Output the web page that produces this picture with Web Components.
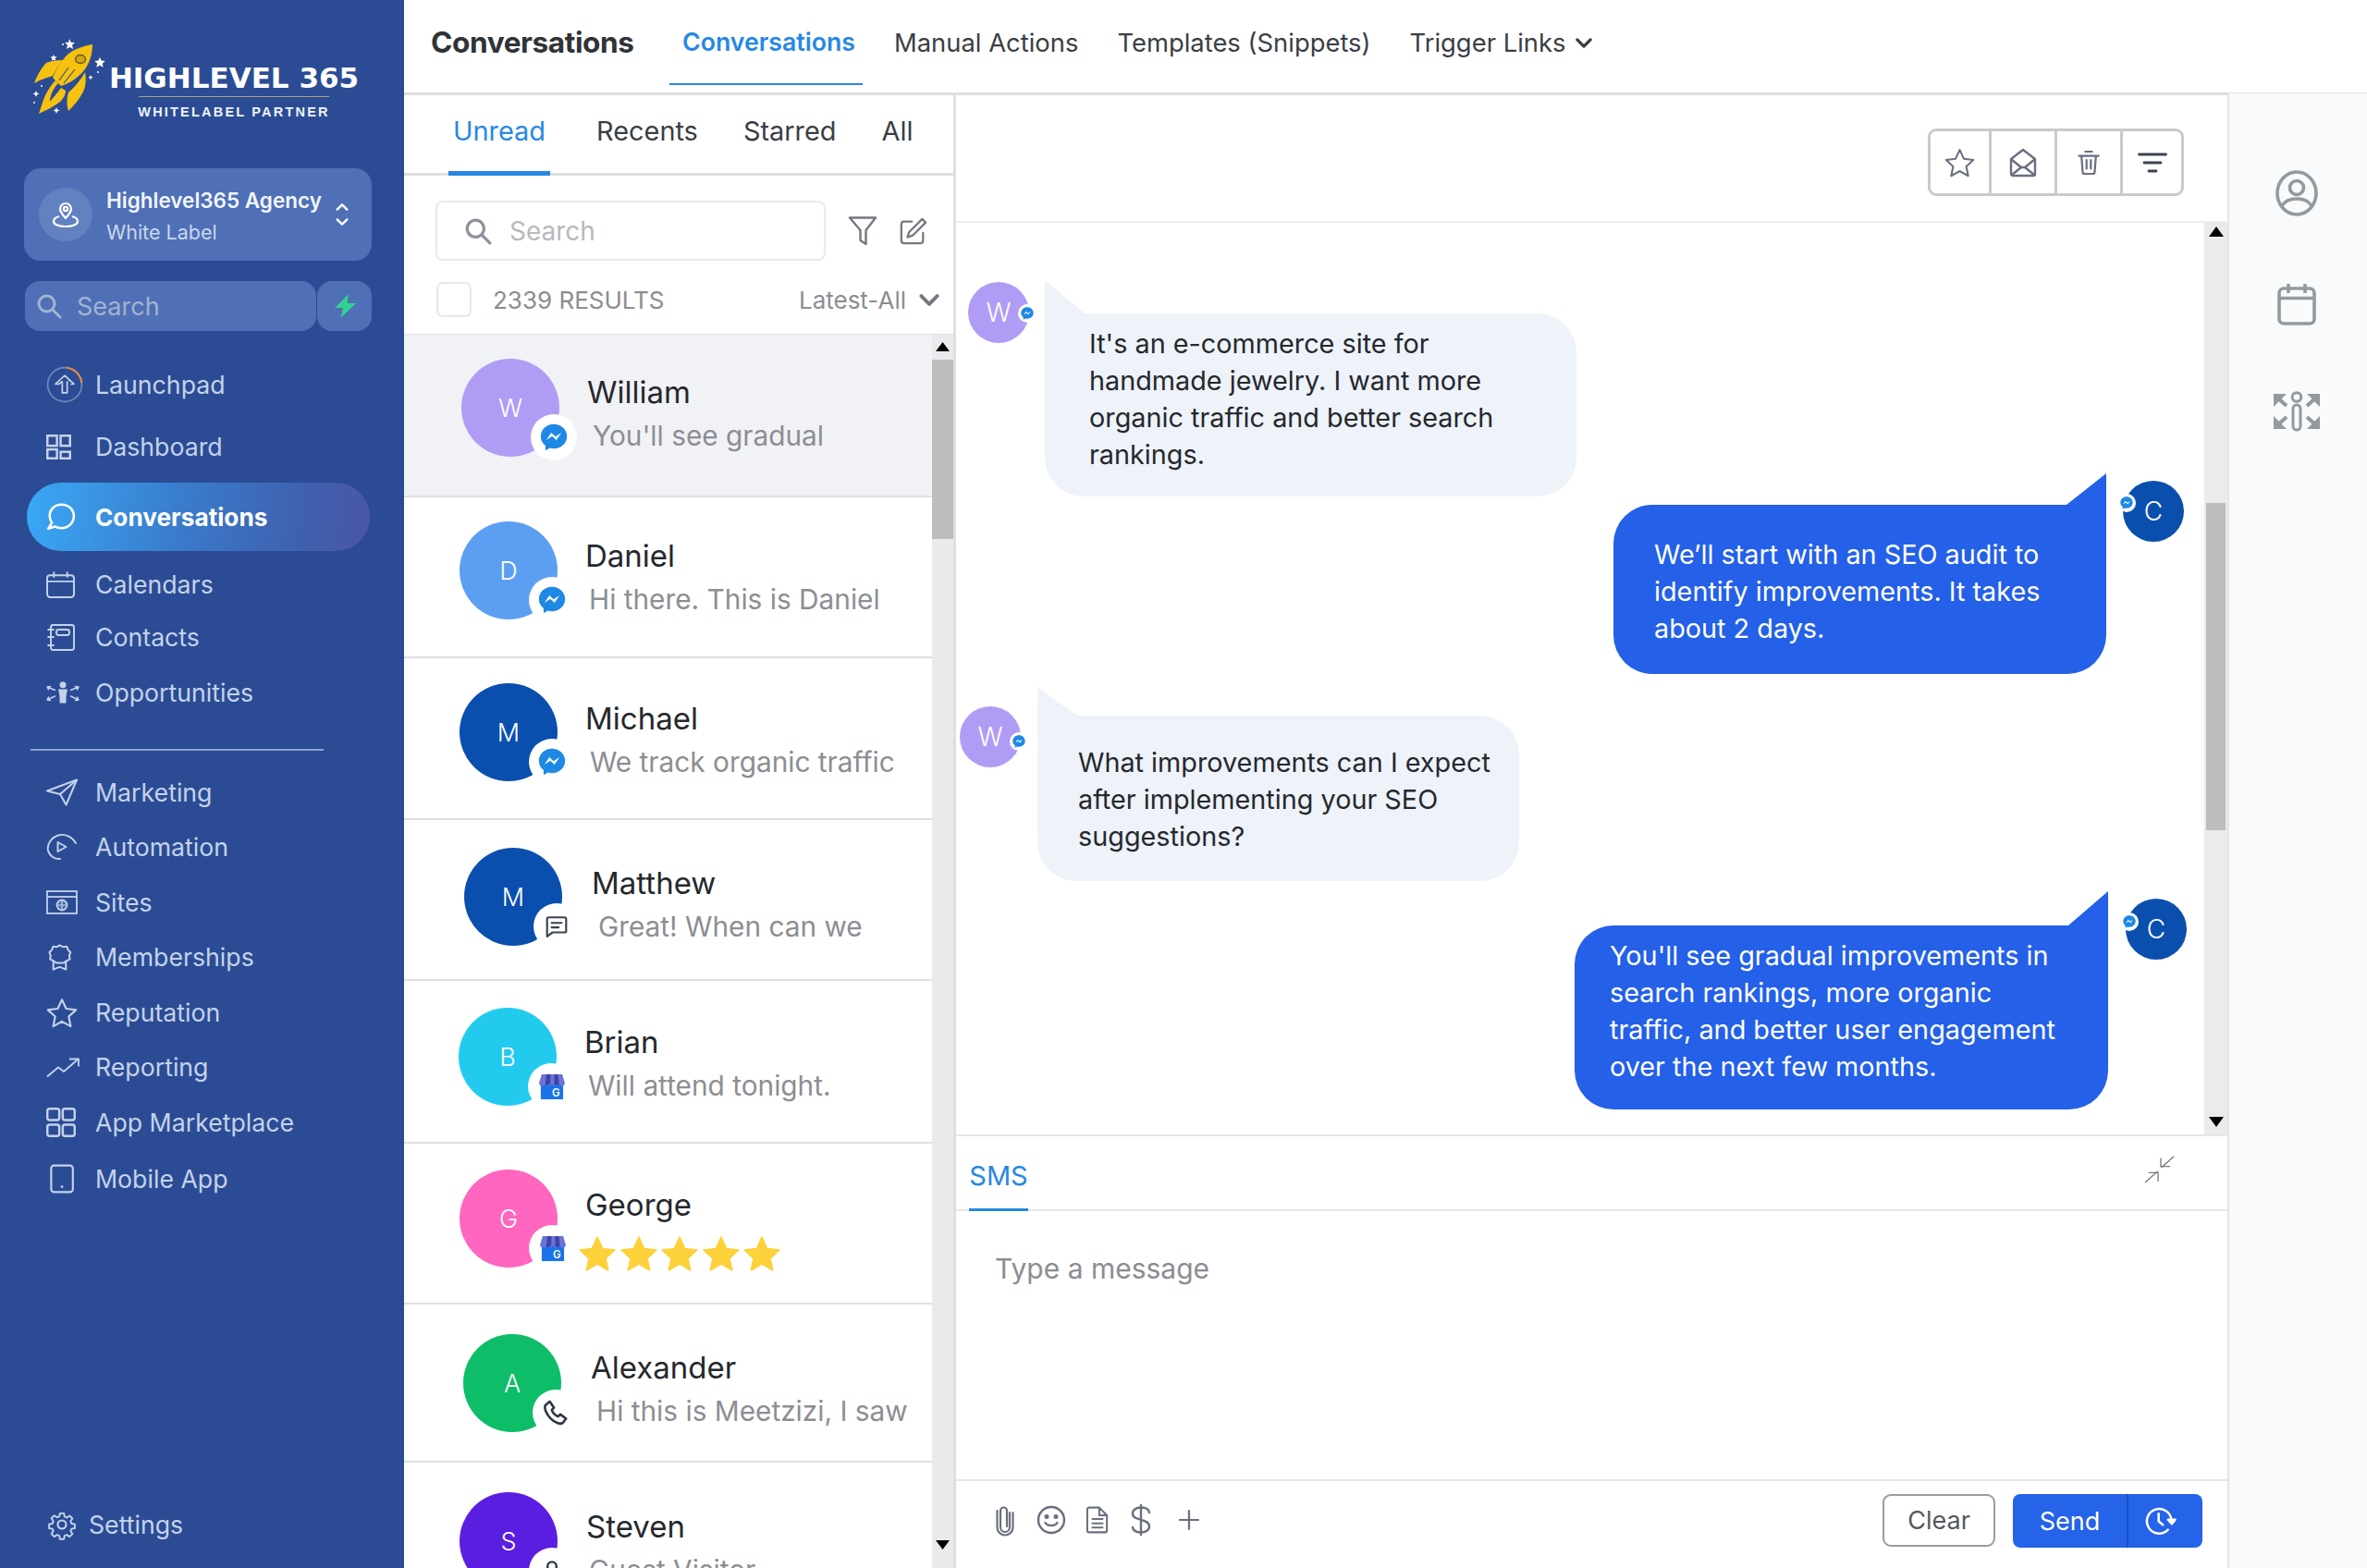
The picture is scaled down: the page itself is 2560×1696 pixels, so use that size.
<!DOCTYPE html>
<html>
<head>
<meta charset="utf-8">
<title>Conversations</title>
<style>
  html, body { margin: 0; padding: 0; height: 1696px; overflow: hidden; background: #fff; font-family: Inter, "Noto Sans", sans-serif; }
</style>
</head>
<body>
<hl-app>
  <hl-sidebar slot="side">
    <hl-logo></hl-logo>
    <hl-agency title-text="Highlevel365 Agency" sub-text="White Label"></hl-agency>
    <hl-side-search></hl-side-search>
    <hl-nav-item icon="launch" size="40" h="60" style="margin-top:28px">Launchpad</hl-nav-item>
    <hl-nav-item icon="dash" size="27" h="60" style="margin-top:7px">Dashboard</hl-nav-item>
    <hl-nav-item icon="chat" size="32" h="74" active style="margin-top:9px">Conversations</hl-nav-item>
    <hl-nav-item icon="calendar" size="31" h="54" style="margin-top:9px">Calendars</hl-nav-item>
    <hl-nav-item icon="contacts" size="32" h="54" style="margin-top:3px">Contacts</hl-nav-item>
    <hl-nav-item icon="opps" size="36" h="54" style="margin-top:6px">Opportunities</hl-nav-item>
    <hl-nav-divider></hl-nav-divider>
    <hl-nav-item icon="send" size="34" h="59.5">Marketing</hl-nav-item>
    <hl-nav-item icon="auto" size="34" h="59.5">Automation</hl-nav-item>
    <hl-nav-item icon="sites" size="34" h="59.5">Sites</hl-nav-item>
    <hl-nav-item icon="badge" size="29" h="59.5">Memberships</hl-nav-item>
    <hl-nav-item icon="star" size="34" h="59.5">Reputation</hl-nav-item>
    <hl-nav-item icon="trend" size="36" h="59.5">Reporting</hl-nav-item>
    <hl-nav-item icon="grid" size="32" h="59.5">App Marketplace</hl-nav-item>
    <hl-nav-item icon="mobile" size="32" h="60" style="margin-top:1px">Mobile App</hl-nav-item>
    <hl-nav-item icon="gear" size="34" h="60" cell="46" style="margin-top:auto;margin-bottom:17px">Settings</hl-nav-item>
  </hl-sidebar>

  <hl-topbar slot="top"></hl-topbar>

  <hl-conv-list slot="list">
    <hl-conv-row name="William" initial="W" color="#b19cf5" badge="messenger" selected h="176" ax="62" ay="26" tx="198" ty="42" sx="6">You'll see gradual</hl-conv-row>
    <hl-conv-row name="Daniel" initial="D" color="#5c9ff2" badge="messenger" h="174" ax="60" ay="26" tx="196" ty="43" sx="4">Hi there. This is Daniel</hl-conv-row>
    <hl-conv-row name="Michael" initial="M" color="#0b4fae" badge="messenger" h="175" ax="60" ay="27" tx="196" ty="45" sx="5">We track organic traffic</hl-conv-row>
    <hl-conv-row name="Matthew" initial="M" color="#0b4fae" badge="sms" h="174" ax="65" ay="30" tx="203" ty="48" sx="7">Great! When can we</hl-conv-row>
    <hl-conv-row name="Brian" initial="B" color="#22cbee" badge="gmb" h="176" ax="59" ay="29" tx="195" ty="46" sx="4">Will attend tonight.</hl-conv-row>
    <hl-conv-row name="George" initial="G" color="#ff66bf" badge="gmb" h="174" ax="60" ay="28" tx="196" ty="46" stars></hl-conv-row>
    <hl-conv-row name="Alexander" initial="A" color="#0dbd68" badge="phone" h="171" ax="64" ay="32" tx="202" ty="48" sx="6">Hi this is Meetzizi, I saw</hl-conv-row>
    <hl-conv-row name="Steven" initial="S" color="#5b1ee0" badge="guest" h="200" ax="60" ay="32" tx="197" ty="49" sx="3">Guest Visitor</hl-conv-row>
  </hl-conv-list>

  <hl-chat slot="chat">
    <hl-msg from="W" color="#b19cf5" w="575" tail="36" pt="13" pb="25" px="48" inset="13" gap="17" ay="2" dot="24" style="margin-top:62px">It's an e-commerce site for<br>handmade jewelry. I want more<br>organic traffic and better search<br>rankings.</hl-msg>
    <hl-msg sent from="C" color="#0b4fae" w="533" tail="34" pt="34" pb="29" px="44" inset="22" gap="18" ay="8" dot="14" style="margin-top:-25px">We’ll start with an SEO audit to<br>identify improvements. It takes<br>about 2 days.</hl-msg>
    <hl-msg from="W" color="#b19cf5" w="521" tail="31" pt="31" pb="28" px="44" inset="4" gap="18" ay="21" dot="28" style="margin-top:14px">What improvements can I expect<br>after implementing your SEO<br>suggestions?</hl-msg>
    <hl-msg sent from="C" color="#0b4fae" w="577" tail="37" pt="13" pb="26" px="38" inset="19" gap="19" ay="8" dot="15" style="margin-top:11px">You'll see gradual improvements in<br>search rankings, more organic<br>traffic, and better user engagement<br>over the next few months.</hl-msg>
  </hl-chat>

  <hl-rail slot="rail"></hl-rail>
</hl-app>

<script>
// every icon lives here, drawn on its own viewBox
const ICONS = {
  launch: `<svg viewBox="0 0 38 38" fill="none" stroke="currentColor" stroke-width="1.6" stroke-linejoin="round"><circle cx="19" cy="19" r="17.5" stroke="#7189bd"/><path d="M21 1.7A17.5 17.5 0 0 1 36.4 17" stroke="#e88b3f" stroke-width="2"/><path d="M19 9.5 28.5 18.5h-3.5M19 9.5 9.5 18.5H13l3.5-3M21.5 15.5v12h-5v-12M19 9.5l6 6"/></svg>`,
  dash: `<svg viewBox="0 0 26 26" fill="none" stroke="currentColor" stroke-width="2.400"><rect x="1.200" y="1.200" width="10" height="10.500"/><rect x="15" y="1.200" width="9.800" height="10.500"/><rect x="1.200" y="15.500" width="10" height="9.300"/><rect x="15" y="18" width="9.800" height="6.800"/></svg>`,
  grid: `<svg viewBox="0 0 26 26" fill="none" stroke="currentColor" stroke-width="2"><rect x="1" y="1" width="10.500" height="10" rx="2"/><rect x="14.500" y="1" width="10.500" height="10" rx="2"/><rect x="1" y="15" width="10.500" height="10" rx="2"/><rect x="14.500" y="15" width="10.500" height="10" rx="2"/></svg>`,
  chat: `<svg viewBox="0 0 30 30" fill="none" stroke="currentColor" stroke-width="2.400" stroke-linejoin="round"><path d="M15.500 2.500C8.600 2.500 3.500 7.600 3.500 14c0 2.600.8 5 2.200 6.900L2 27l6.600-2.200c2 1.100 4.400 1.700 6.900 1.700 6.900 0 12.500-5.500 12.500-12.200S22.400 2.500 15.500 2.500z"/></svg>`,
  calendar: `<svg viewBox="0 0 30 30" fill="none" stroke="currentColor" stroke-width="1.900" stroke-linejoin="round"><rect x="1" y="5" width="28" height="23" rx="3"/><path d="M1 11.500h28M8 1.500v6M22 1.500v6"/></svg>`,
  contacts: `<svg viewBox="0 0 32 32" fill="none" stroke="currentColor" stroke-width="1.900" stroke-linejoin="round"><rect x="5" y="3" width="25" height="27" rx="2.500"/><rect x="11" y="8" width="14" height="6" rx="2.500"/><path d="M1.500 8h7M1.500 16h7M1.500 25h7"/></svg>`,
  opps: `<svg viewBox="0 0 36 24" fill="currentColor" stroke="currentColor" stroke-width="1.400" stroke-linecap="round"><circle cx="18" cy="3.800" r="3.500" stroke="none"/><path d="M13 8.500h10l-1.500 7.500v7.500h-7V16z" stroke="none"/><path d="M1 6l8.500 3.500M1 20l8.500-4M35 6l-8.500 3.500M35 20l-8.500-4M1 6l3.500-.5M1 6l1.500 3M35 6l-3.500-.5M35 6l-1.500 3M1 20l3.500.5M1 20l1.500-3M35 20l-3.500.5M35 20l-1.500-3" fill="none"/></svg>`,
  send: `<svg viewBox="0 0 34 30" fill="none" stroke="currentColor" stroke-width="2" stroke-linejoin="round"><path d="M1 13.500 33 1.500 21.500 28.500 15 17z"/><path d="M15 17 33 1.500"/></svg>`,
  auto: `<svg viewBox="0 0 34 30" fill="none" stroke="currentColor" stroke-width="1.900" stroke-linecap="round" stroke-linejoin="round"><path d="M32 11C28 4 20 .5 13 2.500 5 5 .5 13 2 19c1.500 6 7.500 9.500 13 9"/><path d="M12.500 10l9 5-9 5z"/></svg>`,
  sites: `<svg viewBox="0 0 34 26" fill="none" stroke="currentColor" stroke-width="1.800"><rect x="1" y="1" width="32" height="24"/><path d="M1 7h32"/><circle cx="17" cy="16" r="5.500" fill="currentColor" fill-opacity=".25"/><path d="M11.500 16h11M17 10.500v11" stroke-width="1.200"/></svg>`,
  badge: `<svg viewBox="0 0 28 32" fill="none" stroke="currentColor" stroke-width="2.200" stroke-linejoin="round"><path d="M14 1.500l4 2 4.500-.5 1.500 4 3 3-1.500 4 .8 4-4 2.300-3.500 2.200H10l-3.500-2.200-4-2.300.8-4-1.500-4 3-3L6.300 3l4.500.5z"/><path d="M6.500 20.500V30.500l7.500-3 7.500 3v-10"/></svg>`,
  star: `<svg viewBox="0 0 32 30" fill="none" stroke="currentColor" stroke-width="2" stroke-linejoin="round"><path d="M16 2l4.300 9.300 10 1.200-7.400 6.800 2 10L16 24.300 7.100 29.300l2-10-7.400-6.800 10-1.200z"/></svg>`,
  trend: `<svg viewBox="0 0 36 24" fill="none" stroke="currentColor" stroke-width="1.800" stroke-linejoin="round"><path d="M1 22.500 13 12.500l6 4.500L34 4"/><path d="M25 3.500h10v8"/></svg>`,
  mobile: `<svg viewBox="0 0 30 30" fill="none" stroke="currentColor" stroke-width="2"><rect x="5" y="1.500" width="22" height="27" rx="3"/><circle cx="16" cy="23" r="1.300" fill="currentColor" stroke="none"/></svg>`,
  gear: `<svg viewBox="0 0 24 24" fill="none" stroke="currentColor" stroke-width="1.500" stroke-linejoin="round"><circle cx="12" cy="12" r="3.200"/><path d="M10.300 2.500h3.400l.5 2.800 1.900.8 2.400-1.600 2.400 2.400-1.600 2.400.8 1.900 2.800.5v3.400l-2.800.5-.8 1.900 1.600 2.400-2.400 2.400-2.400-1.600-1.900.8-.5 2.800h-3.400l-.5-2.800-1.900-.8-2.400 1.600-2.400-2.400 1.600-2.400-.8-1.900-2.800-.5v-3.400l2.800-.5.8-1.900L3.100 6.700l2.400-2.400 2.400 1.600 1.900-.8z" transform="translate(1.200 1.200) scale(.9)"/></svg>`,
  search: `<svg viewBox="0 0 28 28" fill="none" stroke="currentColor" stroke-width="3" stroke-linecap="round"><circle cx="11.500" cy="11.500" r="8.500"/><path d="M18 18l8 8"/></svg>`,
  bolt: `<svg viewBox="0 0 28 28" fill="currentColor"><path d="M18 1 3 16h9L9.500 27 26 11h-9.500z"/></svg>`,
  pin: `<svg viewBox="0 0 30 30" fill="none" stroke="currentColor" stroke-width="2.200" stroke-linejoin="round"><path d="M15 19c-3-3.500-6-6.500-6-10a6 6 0 0 1 12 0c0 3.500-3 6.500-6 10z"/><circle cx="15" cy="9" r="2.200"/><path d="M8 17c-3.500 1-6 3-6 5.500C2 26 8 28 15 28s13-2 13-5.500c0-2.500-2.500-4.500-6-5.500"/></svg>`,
  updown: `<svg viewBox="0 0 18 30" fill="none" stroke="currentColor" stroke-width="2.600" stroke-linecap="round" stroke-linejoin="round"><path d="M3 9l6-6 6 6M3 21l6 6 6-6"/></svg>`,
  chevron: `<svg viewBox="0 0 20 12" fill="none" stroke="currentColor" stroke-width="3.600" stroke-linecap="round" stroke-linejoin="round"><path d="M2 2l8 8 8-8"/></svg>`,
  filter: `<svg viewBox="0 0 32 34" fill="none" stroke="currentColor" stroke-width="2.400" stroke-linejoin="round"><path d="M2 2.500h28L19.500 16v15l-6-4V16z"/></svg>`,
  edit: `<svg viewBox="0 0 32 32" fill="none" stroke="currentColor" stroke-width="2.400" stroke-linejoin="round" stroke-linecap="round"><path d="M27 18v9a3 3 0 0 1-3 3H5a3 3 0 0 1-3-3V8a3 3 0 0 1 3-3h9"/><path d="M26 2l4 4-15 15-6 2 2-6z"/></svg>`,
  envelope: `<svg viewBox="0 0 30 32" fill="none" stroke="currentColor" stroke-width="2.400" stroke-linejoin="round"><path d="M2 12 15 2l13 10v16a2 2 0 0 1-2 2H4a2 2 0 0 1-2-2z"/><path d="M2.500 12.500 13 21h4l10.500-8.500M3 29l10-8M27 29l-10-8"/></svg>`,
  trash: `<svg viewBox="0 0 26 30" fill="none" stroke="currentColor" stroke-width="2.400" stroke-linejoin="round" stroke-linecap="round"><path d="M1.500 7h23M9 2h8M4.500 7l1.500 19a2 2 0 0 0 2 2h10a2 2 0 0 0 2-2l1.500-19M10.500 12v10M15.500 12v10"/></svg>`,
  lines: `<svg viewBox="0 0 32 24" fill="none" stroke="#3d4350" stroke-width="2.800" stroke-linecap="round"><path d="M1.500 3h29M7 12h18M12 21h8"/></svg>`,
  user: `<svg viewBox="0 0 46 50" fill="none" stroke="currentColor" stroke-width="3.600"><ellipse cx="23" cy="25" rx="21" ry="23"/><circle cx="23" cy="19" r="7.500"/><path d="M7 39c3-6 9-8 16-8s13 2 16 8"/></svg>`,
  railcal: `<svg viewBox="0 0 42 46" fill="none" stroke="currentColor" stroke-width="3.600" stroke-linejoin="round"><rect x="2" y="6" width="38" height="38" rx="5"/><path d="M2 16.500h38M12 1v10M30 1v10"/></svg>`,
  network: `<svg viewBox="0 0 52 44" fill="currentColor"><circle cx="26" cy="6.500" r="4.800" fill="none" stroke="currentColor" stroke-width="3"/><rect x="22" y="15" width="8" height="27" rx="4" fill="none" stroke="currentColor" stroke-width="3"/><path d="M1 3h14L1 17zM51 3H37l14 14zM1 41h14L1 27zM51 41H37l14-14z"/><path d="M5 7l10 9M47 7l-10 9M5 37l10-9M47 37l-10-9" fill="none" stroke="currentColor" stroke-width="4"/></svg>`,
  compress: `<svg viewBox="0 0 34 30" fill="none" stroke="#777" stroke-width="1.300"><path d="M1 29.500 15 17M5 18.500h10.500v10M33 .5 19 13M29 11.500H18.500V2"/></svg>`,
  clip: `<svg viewBox="0 0 20 34" fill="none" stroke="currentColor" stroke-width="2.200" stroke-linecap="round"><path d="M15 9v16a5 5 0 0 1-10 0V7a3.500 3.500 0 0 1 7 0v17"/><path d="M18.500 9v16a8.500 8.500 0 0 1-17 0V7"/></svg>`,
  smile: `<svg viewBox="0 0 32 32" fill="none" stroke="currentColor" stroke-width="2.400" stroke-linecap="round"><circle cx="16" cy="16" r="14"/><circle cx="11" cy="12.500" r="1.300" fill="currentColor"/><circle cx="21" cy="12.500" r="1.300" fill="currentColor"/><path d="M9.500 19c2 4 11 4 13 0"/></svg>`,
  doc: `<svg viewBox="0 0 26 32" fill="none" stroke="currentColor" stroke-width="2.200" stroke-linejoin="round" stroke-linecap="round"><path d="M3 1.500h12l9 9v18a2 2 0 0 1-2 2H3a2 2 0 0 1-2-2v-25a2 2 0 0 1 2-2zM15 1.500v9h9M7 15h12M7 20h12M7 25h12"/></svg>`,
  dollar: `<svg viewBox="0 0 22 34" fill="none" stroke="currentColor" stroke-width="2.400" stroke-linecap="round"><path d="M20 9c-.5-3.500-4-5.500-9-5.500S2 6 2 10c0 4.500 4 5.500 9 6.800s9 2.700 9 7.200c0 4-4 6.500-9 6.500s-8.500-2-9-5.500M11 1v32"/></svg>`,
  plus: `<svg viewBox="0 0 24 24" fill="none" stroke="currentColor" stroke-width="2.200" stroke-linecap="round"><path d="M12 2v20M2 12h20"/></svg>`,
  clock: `<svg viewBox="0 0 36 36" fill="none" stroke="#fff" stroke-width="2.800" stroke-linecap="round" stroke-linejoin="round"><path d="M31 16A14.500 14.500 0 1 0 27 28"/><path d="M16 9v9l5 4"/><path d="M27 16l4.500 5 4-5z" fill="#fff"/></svg>`,
  messenger: `<svg viewBox="0 0 24 24"><path fill="#1e88e5" d="M12 2C6.500 2 2 6.100 2 11.300c0 2.900 1.400 5.400 3.600 7.100V22l3.300-1.800c1 .3 2 .4 3.100.4 5.500 0 10-4.100 10-9.300S17.500 2 12 2z"/><path fill="#fff" d="M6.200 14.200l3.800-5.700 3.200 3 4.600-3-3.900 5.700-3.200-3z"/></svg>`,
  sms: `<svg viewBox="0 0 24 24" fill="none" stroke="#3a4250" stroke-width="2" stroke-linejoin="round" stroke-linecap="round"><path d="M4 3h16a1.500 1.500 0 0 1 1.500 1.500v12A1.500 1.500 0 0 1 20 18H8l-5.500 4V4.500A1.500 1.500 0 0 1 4 3z"/><path d="M7 8.500h10M7 13h7"/></svg>`,
  gmb: `<svg viewBox="0 0 30 30"><rect x="3" y="10" width="25" height="19" fill="#1a73e8"/><path d="M4 1h23l3 10a3.600 3.600 0 0 1-7 .5 4 4 0 0 1-7.500 0 4 4 0 0 1-7.500 0A3.600 3.600 0 0 1 1 11z" fill="#6e73d6"/><path d="M9.500 1h4.500l-.5 10.500a3.500 3.500 0 0 1-5.500 1zM18 1h4l1.500 10.500a3.500 3.500 0 0 1-5.500 1z" fill="#3b44a8"/><text x="20" y="26" font-family="Inter, sans-serif" font-size="12" font-weight="600" fill="#fff" text-anchor="middle">G</text></svg>`,
  phone: `<svg viewBox="0 0 30 30" fill="none" stroke="#2f3744" stroke-width="2.800" stroke-linejoin="round"><path d="M3 6.500 8 2l5 7-2.500 3c1 3 4 6 7 7.500l3-2.500 6.500 5-4 5c-3 2-9-.5-14-5.500S1.500 10 3 6.500z"/></svg>`,
  guest: `<svg viewBox="0 0 30 30" fill="none" stroke="#2f3744" stroke-width="3"><circle cx="15" cy="9" r="6"/><path d="M5 28c0-7 4-10 10-10s10 3 10 10"/></svg>`,
  goldstar: `<svg viewBox="0 0 40 38"><path fill="#fdd13a" d="M20 1l5.600 12.400L39 15l-10 9.100L31.800 37 20 30.200 8.200 37 11 24.100 1 15l13.400-1.600z" stroke="#fdd13a" stroke-width="1.500" stroke-linejoin="round"/></svg>`,
  rocket: `<svg viewBox="0 0 88 86"><g fill="#f7c20e"><path d="M67 8C55 10 45 14 38 21 32 28 27 36 24 44l9 9c9-3 19-9 25-17 6-8 9-18 9-28z"/><path d="M35 25c-7 0-13 1-18 3C12 33 7 42 4 50c7-4 14-6 20-8 3-6 7-12 11-17z"/><path d="M59 38c1 6 1 14-1 19-4 9-11 17-17 23-2-6-2-14 0-20 6-5 13-13 18-22z"/><path d="M27 47c-5 5-10 13-13 21L9 83c8-4 17-8 23-13 4-4 6-8 6-12l-5-3c-5 7-9 11-12 15 0-7 4-15 9-20z"/></g><path d="M31 47l10-14M36 50l12-15" stroke="#2b4c94" stroke-width="1.100" fill="none"/><ellipse cx="54" cy="24" rx="5.500" ry="4.500" fill="#d8a80a" stroke="#5a5a40" stroke-width="1.400"/><g fill="#fff"><path d="M42 2l1.800 3.800L48 6l-3 2.800 1 4.200-3.500-2-3.500 2 1-4.200-3-2.800 4.200-.2z"/><path d="M75 22l1.700 3.600 4 .4-3 2.700 1 4-3.700-2-3.700 2 1-4-3-2.700 4-.4z"/><path d="M29 17l1 2.300 2.500.2-1.900 1.700.6 2.500-2.200-1.300-2.200 1.300.6-2.500-1.900-1.700 2.500-.2z" transform="translate(-4 2)"/><path d="M6 58l1 2.500 2.500 1-2.500 1-1 2.500-1-2.500-2.500-1 2.500-1z"/><path d="M28 76l1 2.500 2.500 1-2.500 1-1 2.500-1-2.500-2.500-1 2.500-1z"/><path d="M65 41l.8 2 2 .8-2 .8-.8 2-.8-2-2-.8 2-.8z"/><circle cx="12" cy="53" r="1"/><circle cx="4" cy="71" r="1"/><circle cx="73" cy="38" r="1"/><circle cx="35" cy="8" r="1"/></g></svg>`
};

class HlIcon extends HTMLElement {
  constructor() {
    super();
    this.attachShadow({ mode: "open" });
  }
  connectedCallback() {
    const size = this.getAttribute("size") || 24;
    this.shadowRoot.innerHTML = `
      <style>
        :host { display: inline-flex; align-items: center; justify-content: center; flex: none; width: ${size}px; height: ${this.getAttribute("height") || size}px; }
        svg { width: 100%; height: 100%; display: block; overflow: visible; }
      </style>
      ${ICONS[this.getAttribute("name")] || ""}`;
  }
}

class HlApp extends HTMLElement {
  constructor() {
    super();
    this.attachShadow({ mode: "open" }).innerHTML = `
      <style>
        :host { display: grid; grid-template-columns: 437px 597px 1fr 151px; grid-template-rows: 100px 1fr; height: 1696px; overflow: hidden; color: #2b2f36; }
        .side { grid-column: 1; grid-row: 1 / 3; display: flex; min-height: 0; }
        .top { grid-column: 2 / 5; grid-row: 1; display: flex; }
        .list, .chat { grid-row: 2; border-top: 3px solid #dedfe1; min-height: 0; display: flex; overflow: hidden; }
        .list { grid-column: 2; }
        .chat { grid-column: 3; }
        .rail { grid-column: 4; grid-row: 2; display: flex; min-height: 0; }
        ::slotted(*) { flex: 1; min-width: 0; }
      </style>
      <div class="side"><slot name="side"></slot></div>
      <div class="top"><slot name="top"></slot></div>
      <div class="list"><slot name="list"></slot></div>
      <div class="chat"><slot name="chat"></slot></div>
      <div class="rail"><slot name="rail"></slot></div>`;
  }
}

class HlSidebar extends HTMLElement {
  constructor() {
    super();
    this.attachShadow({ mode: "open" }).innerHTML = `
      <style>
        :host { display: flex; flex-direction: column; background: #2b4c94; box-sizing: border-box; height: 1696px; color: #c5d2ea; font-family: Inter, sans-serif; }
      </style>
      <slot></slot>`;
  }
}

class HlLogo extends HTMLElement {
  constructor() {
    super();
    this.attachShadow({ mode: "open" }).innerHTML = `
      <style>
        :host { display: flex; box-sizing: border-box; height: 182px; padding: 40px 0 0 33px; }
        .text { margin: 33px 0 0 -2px; display: flex; flex-direction: column; align-items: center; width: 268px; }
        .name { font: 700 31px/22px "DejaVu Sans", sans-serif; color: #fff; white-space: nowrap; }
        .rule { width: 206px; height: 1px; margin-top: 9px; background: #a9a27c; }
        .sub { font: 700 14.5px/16px "Liberation Sans", sans-serif; letter-spacing: 2.2px; color: #eef2f8; margin-top: 8px; white-space: nowrap; }
      </style>
      <hl-icon name="rocket" size="88" height="86"></hl-icon>
      <div class="text">
        <div class="name">HIGHLEVEL 365</div>
        <div class="rule"></div>
        <div class="sub">WHITELABEL PARTNER</div>
      </div>`;
  }
}

class HlAgency extends HTMLElement {
  constructor() {
    super();
    this.attachShadow({ mode: "open" });
  }
  connectedCallback() {
    this.shadowRoot.innerHTML = `
      <style>
        :host { display: flex; align-items: center; box-sizing: border-box; height: 100px; margin: 0 35px 0 26px; padding: 0 24px 0 16px; background: #4f70b6; border-radius: 18px; }
        .ico { width: 58px; height: 58px; border-radius: 50%; background: #6281c1; display: flex; align-items: center; justify-content: center; color: #fff; flex: none; }
        .txt { margin-left: 15px; flex: 1; padding-top: 2px; }
        .t { font: 600 22.5px/32px Inter, sans-serif; color: #f2f5fb; white-space: nowrap; }
        .s { font: 400 21.5px/30px Inter, sans-serif; color: #cbd6eb; margin-top: 3px; }
        hl-icon.arrows { color: #fff; }
      </style>
      <div class="ico"><hl-icon name="pin" size="30"></hl-icon></div>
      <div class="txt">
        <div class="t">${this.getAttribute("title-text")}</div>
        <div class="s">${this.getAttribute("sub-text")}</div>
      </div>
      <hl-icon class="arrows" name="updown" size="16" height="30"></hl-icon>`;
  }
}

class HlSideSearch extends HTMLElement {
  constructor() {
    super();
    this.attachShadow({ mode: "open" }).innerHTML = `
      <style>
        :host { display: flex; gap: 1px; height: 54px; margin: 22px 35px 0 27px; }
        .box { flex: 1; display: flex; align-items: center; background: #4f70b6; border-radius: 16px; padding-left: 12px; color: #a3b3d2; font: 400 27px Inter, sans-serif; }
        .box span { margin-left: 16px; }
        .btn { width: 59px; background: #4f70b6; border-radius: 16px; display: flex; align-items: center; justify-content: center; color: #33d18f; }
      </style>
      <div class="box"><hl-icon name="search" size="28"></hl-icon><span>Search</span></div>
      <div class="btn"><hl-icon name="bolt" size="28"></hl-icon></div>`;
  }
}

class HlNavItem extends HTMLElement {
  constructor() {
    super();
    this.attachShadow({ mode: "open" });
  }
  connectedCallback() {
    const active = this.hasAttribute("active");
    const cell = this.getAttribute("cell") || 53;
    this.shadowRoot.innerHTML = `
      <style>
        :host { display: flex; align-items: center; box-sizing: border-box; flex: none; height: ${this.getAttribute("h")}px; margin-left: 29px; margin-right: 37px; padding-left: 21px; border-radius: 37px; font: ${active ? "700 26.2px" : "400 26.7px"} Inter, sans-serif; color: ${active ? "#fff" : "#c5d2ea"}; ${active ? "background: linear-gradient(100deg,#39a9f6 0%,#3a7bcc 45%,#3f60ae 80%,#4c55a6 100%);" : ""} }
        .cell { width: ${cell}px; flex: none; display: flex; }
      </style>
      <div class="cell"><hl-icon name="${this.getAttribute("icon")}" size="${this.getAttribute("size") || 32}"></hl-icon></div>
      <slot></slot>`;
  }
}

class HlNavDivider extends HTMLElement {
  constructor() {
    super();
    this.attachShadow({ mode: "open" }).innerHTML = `
      <style>
        :host { display: block; flex: none; height: 2px; width: 317px; margin: 34px 0 15px 33px; background: #8ea3cf; }
      </style>`;
  }
}

class HlTopbar extends HTMLElement {
  constructor() {
    super();
    this.attachShadow({ mode: "open" }).innerHTML = `
      <style>
        :host { display: flex; align-items: stretch; background: #fff; padding-left: 29px; font: 400 27.4px Inter, sans-serif; color: #3a3e45; white-space: nowrap; }
        h1 { font: 700 31.6px/92px Inter, sans-serif; color: #2f3338; margin: 0; width: 258px; letter-spacing: -.4px; }
        .tab { padding: 0 14px; line-height: 92px; height: 92px; box-sizing: border-box; margin-right: 14px; display: flex; align-items: center; gap: 11px; }
        .on { color: #2688e4; font-weight: 600; font-size: 26.7px; padding-right: 8px; border-bottom: 2.5px solid #2688e4; margin-right: 20px; }
        hl-icon { color: #3a3e45; }
      </style>
      <h1>Conversations</h1>
      <div class="tab on">Conversations</div>
      <div class="tab">Manual Actions</div>
      <div class="tab">Templates (Snippets)</div>
      <div class="tab">Trigger Links <hl-icon name="chevron" size="18" height="11"></hl-icon></div>`;
  }
}

class HlConvList extends HTMLElement {
  constructor() {
    super();
    this.attachShadow({ mode: "open" }).innerHTML = `
      <style>
        :host { display: flex; flex-direction: column; box-sizing: border-box; border-right: 3px solid #dedfe1; height: 1593px; overflow: hidden; font-family: Inter, sans-serif; }
        .tabs { display: flex; flex: none; height: 87px; box-sizing: border-box; border-bottom: 3px solid #dedfe1; padding-left: 53px; font-size: 28.9px; color: #3a3e45; }
        .tabs div { line-height: 78px; height: 87px; box-sizing: border-box; margin-right: 49px; white-space: nowrap; }
        .tabs .on { color: #2688e4; border-bottom: 5px solid #2688e4; padding: 0 5px; margin: 0 50px 0 -5px; }
        .find { display: flex; align-items: center; flex: none; height: 65px; margin: 27px 0 0 34px; }
        .box { width: 422px; height: 65px; box-sizing: border-box; border: 2.5px solid #e8eaed; border-radius: 8px; display: flex; align-items: center; padding-left: 29px; color: #b7b9bd; font-size: 28px; }
        .box hl-icon { color: #8e939b; }
        .box span { margin-left: 19px; }
        .find .ic { color: #74787f; margin-left: 24px; }
        .res { display: flex; align-items: center; flex: none; box-sizing: border-box; height: 79px; padding: 5px 0 0 35px; color: #8a8d92; font-size: 26px; }
        .chk { width: 38px; height: 38px; box-sizing: border-box; border: 2.5px solid #e6e8eb; border-radius: 7px; margin-right: 23px; }
        .sort { margin-left: auto; margin-right: 15px; display: flex; align-items: center; gap: 14px; }
        .sort hl-icon { color: #74787f; }
        .body { flex: 1; display: flex; min-height: 0; border-top: 1px solid #e2e3e6; }
        .rows { flex: 1; min-width: 0; overflow: hidden; }
        .bar { width: 23px; flex: none; background: #e9eaec; position: relative; }
        .thumb { position: absolute; top: 27px; left: 0; right: 0; height: 194px; background: #bdbdbd; }
        .up, .dn { position: absolute; left: 4px; width: 15px; height: 10px; background: #000; }
        .up { top: 8px; clip-path: polygon(50% 0, 100% 100%, 0 100%); }
        .dn { bottom: 20px; clip-path: polygon(0 0, 100% 0, 50% 100%); }
      </style>
      <div class="tabs"><div class="on">Unread</div><div>Recents</div><div>Starred</div><div>All</div></div>
      <div class="find">
        <div class="box"><hl-icon name="search" size="30"></hl-icon><span>Search</span></div>
        <hl-icon class="ic" name="filter" size="32" height="34"></hl-icon>
        <hl-icon class="ic" name="edit" size="30"></hl-icon>
      </div>
      <div class="res">
        <div class="chk"></div>2339 RESULTS
        <div class="sort">Latest-All <hl-icon name="chevron" size="22" height="13"></hl-icon></div>
      </div>
      <div class="body">
        <div class="rows"><slot></slot></div>
        <div class="bar"><div class="thumb"></div><div class="up"></div><div class="dn"></div></div>
      </div>`;
  }
}

// badge glyph sizes differ per channel
const BADGE_SIZE = { messenger: 34, sms: 26, gmb: 29, phone: 28, guest: 24 };

class HlConvRow extends HTMLElement {
  constructor() {
    super();
    this.attachShadow({ mode: "open" });
  }
  connectedCallback() {
    const a = (n) => this.getAttribute(n);
    const ax = +a("ax"), tx = +a("tx");
    const badge = a("badge");
    const stars = this.hasAttribute("stars")
      ? `<div class="stars">${'<hl-icon name="goldstar" size="40" height="38"></hl-icon>'.repeat(5)}</div>`
      : `<div class="sub"><slot></slot></div>`;
    this.shadowRoot.innerHTML = `
      <style>
        :host { display: flex; box-sizing: border-box; height: ${a("h")}px; border-bottom: 2px solid #dfe0e3; background: ${this.hasAttribute("selected") ? "#f1f2f6" : "#fff"}; font-family: Inter, sans-serif; }
        .av { position: relative; flex: none; width: 106px; height: 106px; margin: ${a("ay")}px 0 0 ${ax}px; border-radius: 50%; background: ${a("color")}; color: #fff; font-size: 27px; font-weight: 300; display: flex; align-items: center; justify-content: center; }
        .badge { position: absolute; left: 75px; top: 60px; width: 50px; height: 50px; border-radius: 50%; background: #fff; display: flex; align-items: center; justify-content: center; }
        .txt { margin: ${a("ty")}px 0 0 ${tx - ax - 106}px; white-space: nowrap; }
        .name { font-size: 33px; line-height: 40px; color: #25282d; }
        .sub { font-size: 29.8px; line-height: 40px; margin: 7px 0 0 ${a("sx") || 0}px; color: #8c8e93; }
        .stars { display: flex; gap: 4.6px; margin: 14px 0 0 -7px; }
      </style>
      <div class="av">${a("initial")}<div class="badge"><hl-icon name="${badge}" size="${BADGE_SIZE[badge]}"></hl-icon></div></div>
      <div class="txt"><div class="name">${a("name")}</div>${stars}</div>`;
  }
}

class HlChat extends HTMLElement {
  constructor() {
    super();
    this.attachShadow({ mode: "open" }).innerHTML = `
      <style>
        :host { display: flex; flex-direction: column; height: 1593px; font-family: Inter, sans-serif; background: #fff; }
        .tools { flex: none; height: 138px; box-sizing: border-box; border-bottom: 2px solid #ecedef; display: flex; justify-content: flex-end; align-items: flex-start; padding: 36px 47px 0 0; }
        .group { display: flex; height: 73px; box-sizing: border-box; border: 3px solid #c9cacd; border-radius: 9px; color: #6a6f80; }
        .group div { display: flex; align-items: center; justify-content: center; box-sizing: border-box; width: 71px; border-right: 3px solid #c9cacd; }
        .group div:first-child { width: 66px; }
        .group div:last-child { border-right: 0; width: 63px; }
        .scroll { flex: none; height: 988px; display: flex; border-bottom: 2px solid #e6e7ea; box-sizing: border-box; }
        .msgs { flex: 1; min-width: 0; overflow: hidden; }
        .bar { width: 25px; flex: none; background: #e9ebec; position: relative; }
        .thumb { position: absolute; top: 303px; left: 2px; right: 2px; height: 354px; background: #bdbdbd; }
        .up, .dn { position: absolute; left: 5px; width: 16px; height: 11px; background: #000; }
        .up { top: 4px; clip-path: polygon(50% 0, 100% 100%, 0 100%); }
        .dn { bottom: 8px; clip-path: polygon(0 0, 100% 0, 50% 100%); }
        .kind { flex: none; height: 81px; box-sizing: border-box; border-bottom: 2px solid #e6e7ea; display: flex; justify-content: space-between; padding: 0 57px 0 14px; }
        .sms { height: 81px; box-sizing: border-box; line-height: 86px; width: 64px; text-align: center; color: #2688e4; font-size: 29px; border-bottom: 3px solid #2688e4; }
        .kind hl-icon { margin-top: 21px; }
        .input { flex: none; height: 292px; box-sizing: border-box; border-bottom: 2px solid #e6e7ea; padding: 42px 0 0 42px; font-size: 30px; line-height: 40px; color: #8b8d92; }
        .foot { flex: none; height: 94px; display: flex; align-items: flex-start; color: #6a6f80; padding: 14px 27px 0 43px; box-sizing: border-box; }
        .foot .ics { display: flex; align-items: center; height: 56px; }
        .btns { margin-left: auto; display: flex; gap: 19px; }
        .clear { width: 122px; height: 57px; box-sizing: border-box; border: 2.5px solid #9b9b9b; border-radius: 9px; display: flex; align-items: center; justify-content: center; font-size: 27px; color: #55585c; }
        .send { display: flex; width: 205px; height: 58px; background: #2563e8; border-radius: 8px; color: #fff; font-size: 27px; }
        .send span { width: 123px; border-right: 2px solid #1d4fc0; display: flex; align-items: center; justify-content: center; }
        .send div { flex: 1; display: flex; align-items: center; justify-content: center; padding-right: 12px; }
      </style>
      <div class="tools">
        <div class="group">
          <div><hl-icon name="star" size="33"></hl-icon></div>
          <div><hl-icon name="envelope" size="30" height="32"></hl-icon></div>
          <div><hl-icon name="trash" size="24" height="28"></hl-icon></div>
          <div><hl-icon name="lines" size="32" height="24"></hl-icon></div>
        </div>
      </div>
      <div class="scroll">
        <div class="msgs"><slot></slot></div>
        <div class="bar"><div class="thumb"></div><div class="up"></div><div class="dn"></div></div>
      </div>
      <div class="kind"><div class="sms">SMS</div><hl-icon name="compress" size="33" height="30"></hl-icon></div>
      <div class="input">Type a message</div>
      <div class="foot">
        <div class="ics">
          <hl-icon name="clip" size="20" height="34"></hl-icon>
          <hl-icon name="smile" size="32" style="margin-left:24px"></hl-icon>
          <hl-icon name="doc" size="24" height="32" style="margin-left:22px"></hl-icon>
          <hl-icon name="dollar" size="22" height="34" style="margin-left:24px"></hl-icon>
          <hl-icon name="plus" size="24" style="margin-left:29px"></hl-icon>
        </div>
        <div class="btns">
          <div class="clear">Clear</div>
          <div class="send"><span>Send</span><div><hl-icon name="clock" size="33"></hl-icon></div></div>
        </div>
      </div>`;
  }
}

class HlMsg extends HTMLElement {
  constructor() {
    super();
    this.attachShadow({ mode: "open" });
  }
  connectedCallback() {
    const a = (n) => this.getAttribute(n);
    const sent = this.hasAttribute("sent");
    const tail = +a("tail");
    const avatar = `<div class="av">${a("from")}<div class="dot"><hl-icon name="messenger" size="16"></hl-icon></div></div>`;
    const bubble = `<div class="bubble"><div class="tail"></div><slot></slot></div>`;
    this.shadowRoot.innerHTML = `
      <style>
        :host { display: flex; justify-content: ${sent ? "flex-end" : "flex-start"}; align-items: flex-start; ${sent ? "padding-right" : "padding-left"}: ${a("inset")}px; font: 400 28.8px/40px Inter, sans-serif; }
        .av { position: relative; flex: none; width: 66px; height: 66px; margin-top: ${a("ay")}px; border-radius: 50%; background: ${a("color")}; color: #fff; font-size: 28px; font-weight: 300; display: flex; align-items: center; justify-content: center; }
        .dot { position: absolute; ${sent ? "left: -6px" : "right: -8px"}; top: ${a("dot")}px; width: 20px; height: 20px; border-radius: 50%; background: #fff; display: flex; align-items: center; justify-content: center; }
        .bubble { position: relative; box-sizing: border-box; width: ${a("w")}px; margin-top: ${tail}px; ${sent ? "margin-right" : "margin-left"}: ${a("gap")}px; padding: ${a("pt")}px 20px ${a("pb")}px ${a("px")}px; border-radius: ${sent ? "42px 0 42px 42px" : "0 42px 42px 42px"}; background: ${sent ? "#2460e8" : "#eef2f9"}; color: ${sent ? "#fff" : "#25282d"}; white-space: nowrap; }
        .tail { position: absolute; top: ${-tail}px; ${sent ? "right: 0" : "left: 0"}; width: 43px; height: ${tail}px; background: inherit; clip-path: ${sent ? "polygon(100% 0, 100% 100%, 0 100%)" : "polygon(0 0, 100% 100%, 0 100%)"}; }
      </style>
      ${sent ? bubble + avatar : avatar + bubble}`;
  }
}

class HlRail extends HTMLElement {
  constructor() {
    super();
    this.attachShadow({ mode: "open" }).innerHTML = `
      <style>
        :host { display: flex; flex-direction: column; align-items: center; box-sizing: border-box; height: 1596px; background: #f8fafb; border-left: 2px solid #e3e5e8; border-top: 1px solid #e3e5e8; padding: 83px 4px 0 0; color: #94999c; }
        .cal { margin-top: 72px; }
        .net { margin-top: 71px; }
      </style>
      <hl-icon name="user" size="46" height="50"></hl-icon>
      <hl-icon class="cal" name="railcal" size="42" height="46"></hl-icon>
      <hl-icon class="net" name="network" size="52" height="44"></hl-icon>`;
  }
}

customElements.define("hl-icon", HlIcon);
customElements.define("hl-app", HlApp);
customElements.define("hl-sidebar", HlSidebar);
customElements.define("hl-logo", HlLogo);
customElements.define("hl-agency", HlAgency);
customElements.define("hl-side-search", HlSideSearch);
customElements.define("hl-nav-item", HlNavItem);
customElements.define("hl-nav-divider", HlNavDivider);
customElements.define("hl-topbar", HlTopbar);
customElements.define("hl-conv-list", HlConvList);
customElements.define("hl-conv-row", HlConvRow);
customElements.define("hl-chat", HlChat);
customElements.define("hl-msg", HlMsg);
customElements.define("hl-rail", HlRail);
</script>
</body>
</html>
